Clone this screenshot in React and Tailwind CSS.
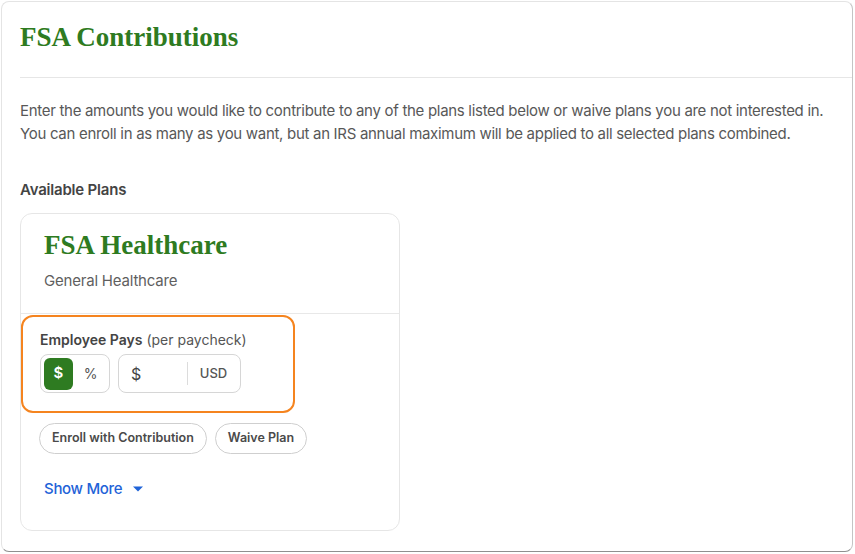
import React from "react";

export default function App() {
  const sans = { fontFamily: "Inter, 'Noto Sans', sans-serif" };
  const serif = { fontFamily: "'Liberation Serif', 'DejaVu Serif', serif" };
  return (
    <div className="w-[855px] h-[554px] bg-white" style={sans}>
      <div className="ml-px mt-px w-[852px] h-[551px] rounded-[8px] border border-[#e4e4e4] border-b-[#8f8f8f] border-r-[#c4c4c4] bg-white overflow-hidden">
        <div className="ml-[18px] pt-[19px] pb-[24px] border-b border-[#e6e6e6]">
          <h1 className="text-[27px] leading-[32px] font-bold text-[#2e7b21]" style={serif}>
            FSA Contributions
          </h1>
        </div>
        <div className="px-[18px]">
          <p className="mt-[21px] text-[15px] leading-[23px] tracking-[-0.3px] text-[#585858]">
            Enter the amounts you would like to contribute to any of the plans listed below or waive plans you are not interested in.
            <br />
            You can enroll in as many as you want, but an IRS annual maximum will be applied to all selected plans combined.
          </p>
          <h2 className="mt-[34px] text-[15px] leading-[22px] font-semibold tracking-[-0.2px] text-[#444]">Available Plans</h2>
          <div className="mt-[12px] w-[380px] h-[318px] rounded-[12px] border border-[#e6e6e6] flex flex-col">
            <div className="pl-[23px] pt-[15px] pb-[21px] border-b border-[#e8e8e8]">
              <div className="text-[27px] leading-[32px] font-bold text-[#2e7b21]" style={serif}>
                FSA Healthcare
              </div>
              <div className="mt-[9px] text-[15px] leading-[22px] tracking-[-0.2px] text-[#5f5f5f]">General Healthcare</div>
            </div>
            <div className="pt-px">
              <div className="w-[274px] rounded-[12px] border-2 border-[#f5841f] pl-[17px] pt-[13px] pb-[18px]">
                <div className="text-[14px] leading-[20px] text-[#444]">
                  <span className="font-semibold">Employee Pays</span>{" "}
                  <span className="text-[#555]">(per paycheck)</span>
                </div>
                <div className="mt-[4px] flex gap-[8px]">
                  <div className="w-[70px] h-[39px] rounded-[8px] border border-[#d6d6d6] flex items-center pl-[3px]">
                    <div className="w-[29px] h-[32px] rounded-[6px] bg-[#2e7b21] text-white text-[15px] font-semibold flex items-center justify-center">
                      $
                    </div>
                    <div className="flex-1 text-center text-[14px] text-[#555] pr-[1px]">%</div>
                  </div>
                  <div className="w-[123px] h-[39px] rounded-[8px] border border-[#d6d6d6] flex items-center">
                    <span className="pl-[12px] w-[68px] text-[16px] text-[#444]">$</span>
                    <span className="w-px h-[23px] bg-[#dcdcdc]" />
                    <span className="flex-1 text-center text-[13px] font-medium text-[#555] pr-[1px]">USD</span>
                  </div>
                </div>
              </div>
            </div>
            <div className="pl-[18px] mt-[10px] flex gap-[8px]">
              <button className="h-[31px] px-[12px] rounded-full border border-[#cfcfcf] text-[12.5px] font-semibold text-[#4a4a4a]">
                Enroll with Contribution
              </button>
              <button className="h-[31px] px-[12px] rounded-full border border-[#cfcfcf] text-[12.5px] font-semibold text-[#4a4a4a]">
                Waive Plan
              </button>
            </div>
            <div className="pl-[23px] mt-[24px] flex items-center gap-[11px] text-[15px] leading-[22px] tracking-[-0.3px] text-[#1f63d8] font-medium">
              <span>Show More</span>
              <svg width="10" height="6" viewBox="0 0 10 6">
                <path d="M0 0.5 L10 0.5 L5 5.5 Z" fill="#1f63d8" />
              </svg>
            </div>
          </div>
        </div>
      </div>
    </div>
  );
}
